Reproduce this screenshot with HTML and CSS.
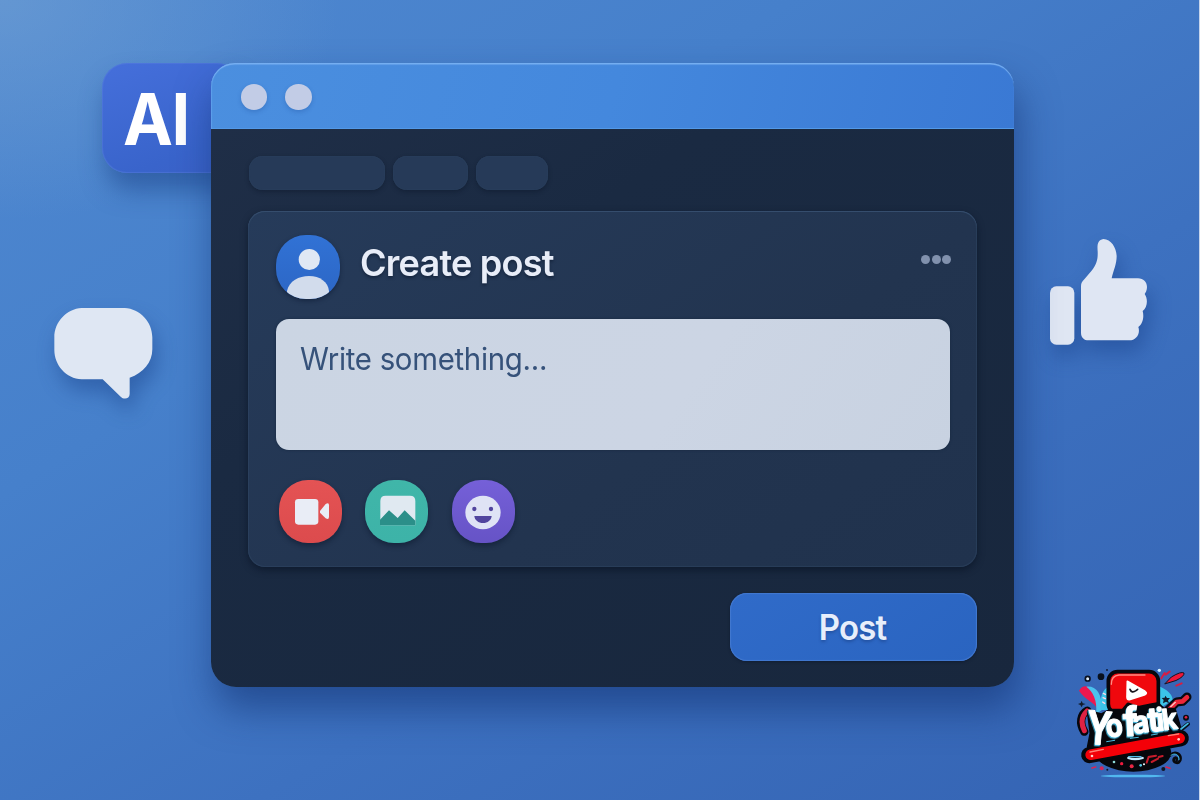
FILE: index.html
```
<!DOCTYPE html>
<html lang="en">
<head>
<meta charset="utf-8">
<title>Create post</title>
<link rel="stylesheet" href="styles.css">
</head>
<body>
<main class="stage">
  <div class="ai-badge"><span class="ai-text">AI</span></div>

  <svg class="bubble" viewBox="0 0 450 390" aria-hidden="true">
    <path fill="#dfe7f3" d="M155 54H284C330 56 367 96 367 142V178C367 216 340 250 299 263V312C299 327 281 330 272 320L218 268H155C108 266 73 225 73 180V142C73 96 110 56 155 54Z"/>
  </svg>

  <svg class="thumb" viewBox="0 0 420 450" aria-hidden="true">
    <rect x="60" y="199" width="73" height="175" rx="19" fill="#dfe6f3"/>
    <path fill="#dfe6f3" d="M153 199C153 189 157 184 163 178L186 151C200 133 204 117 203 94C201 72 204 60 220 57C243 58 259 82 260 108C260 134 250 151 245 175H324C340 175 351 187 351 201C351 211 347 218 344 222C355 238 352 263 338 273C343 291 338 312 325 321C332 342 318 361 298 361H176C162 361 153 352 153 338Z"/>
  </svg>

  <section class="window">
    <header class="titlebar"><i class="dot"></i><i class="dot"></i></header>
    <div class="content">
      <nav class="tabs"><i class="tab tab-wide"></i><i class="tab"></i><i class="tab tab-last"></i></nav>
      <article class="card">
        <div class="card-head">
          <svg class="avatar" viewBox="0 0 64 64" aria-hidden="true">
            <circle cx="33.300" cy="24.500" r="10.600" fill="#e0e8f4"/>
            <path fill="#d2dcec" d="M11 64V56C13 46 23 41 33 41C44 41 52 47 53 56V64Z"/>
          </svg>
          <h1 class="title">Create post</h1>
          <div class="more"><i></i><i></i><i></i></div>
        </div>
        <div class="field"><span class="placeholder">Write something...</span></div>
        <div class="actions">
          <svg class="action video" viewBox="0 0 189 189" aria-hidden="true">
            <rect x="48" y="57" width="70" height="77" rx="10" fill="#e9edf6"/>
            <path fill="#e9edf6" d="M123 93L140 72Q150 66 150 76V110Q150 121 140 115L123 98Z"/>
          </svg>
          <svg class="action image" viewBox="0 0 189 189" aria-hidden="true">
            <path fill="#e0e9f1" d="M46 136V63Q46 47 62 47H135Q151 47 151 63V136Z"/>
            <path fill="#2b8f89" d="M45 136V119L72 91L98 114L119 91L151 122V136Z"/>
          </svg>
          <svg class="action emoji" viewBox="0 0 189 189" aria-hidden="true">
            <ellipse cx="93" cy="97.500" rx="53" ry="50" fill="#dfe3f5"/>
            <circle cx="67" cy="87" r="6.500" fill="#51459e"/>
            <circle cx="117" cy="87" r="6.500" fill="#51459e"/>
            <path fill="#51459e" d="M67 108H119C118 121 107 129 93 129S68 121 67 108Z"/>
          </svg>
        </div>
      </article>
      <footer class="footer"><button class="post"><span class="post-text">Post</span></button></footer>
    </div>
  </section>

  <svg class="logo" viewBox="0 0 390 420" aria-label="Yofatik">
    <ellipse cx="189" cy="348" rx="97" ry="4" fill="#51b8ef"/>
    <g stroke-linecap="round" stroke-linejoin="round">
      <path fill="#ed174f" d="M27 92C40 68 65 80 75 101C84 118 89 134 82 146C73 126 47 122 27 92Z"/>
      <path fill="#4bc1ed" d="M49 80C78 77 96 99 96 150L78 162C83 119 68 95 49 80Z"/>
      <path fill="#3bc4e8" d="M92 150C88 110 98 88 118 78V150ZM266 78C292 90 307 102 308 120L270 145Z"/>
      <circle cx="53" cy="56" r="7" fill="#dceaf8" stroke="#0a1020" stroke-width="5"/>
      <circle cx="93" cy="50" r="10" fill="#08101d"/>
      <circle cx="111" cy="30" r="3" fill="#101c38"/>
      <circle cx="268" cy="31" r="5" fill="#d5f2ff"/>
      <path fill="#ef1738" stroke="#111322" stroke-width="3" d="M285 71L304 51Q334 33 342 39Q344 49 319 61Z"/>
      <path d="M274 55L284 39M287 44L299 35M319 77L335 70" stroke="#d61d43" stroke-width="6"/>
      <path fill="#111b2a" d="M35 122L38 130L47 132L38 135L35 142L31 135L24 132L32 129ZM286 107L291 114L300 114L294 121L297 130L288 125L279 130L281 120L275 114L284 113Z"/>
      <path d="M100 100L106 103M99 113L106 116M98 126L104 130" stroke="#ffd9e7" stroke-width="4"/>
      <path d="M294 151L320 126L338 124L351 111" fill="none" stroke="#080b12" stroke-width="27"/>
      <path d="M295 151L320 126L338 124L351 112" fill="none" stroke="#ed2639" stroke-width="14"/>
      <path d="M302 140L316 127" stroke="#ffc8c6" stroke-width="4"/>
      <ellipse cx="190" cy="278" rx="114" ry="57" fill="#06070c"/>
      <path d="M52 152C32 163 27 190 43 215" fill="none" stroke="#06070c" stroke-width="25"/>
      <path d="M51 153C34 169 31 187 43 212" fill="none" stroke="#df2243" stroke-width="15"/>
      <rect x="115" y="35" width="150" height="125" rx="28" fill="#f0080d" stroke="#07080d" stroke-width="11"/>
      <path d="M124 73Q124 47 147 45H225" fill="none" stroke="#ff8c83" stroke-width="4"/>
      <path d="M172 64L225 94Q233 99 225 104L178 119Q171 120 171 111Z" fill="#fff" stroke="#fff" stroke-width="5"/>
      <path d="M180 88Q185 101 198 92L203 88" fill="none" stroke="#17131a" stroke-width="5"/>
      <path d="M58 285L332 235" stroke="#06070c" stroke-width="49"/>
      <path d="M58 157L94 168L120 154L160 153L175 135L205 145L245 137L262 134L280 150L311 151L327 205L58 260L66 220Z" fill="#06070c" stroke="#06070c" stroke-width="15"/>
      <path d="M62 284L329 235" stroke="#f40008" stroke-width="32"/>
      <path d="M60 276L100 268M295 227L326 222" stroke="#ff8175" stroke-width="4"/>
    </g>
    <g class="word">
      <text transform="translate(45 250) rotate(5)" font-size="138" textLength="76" lengthAdjust="spacingAndGlyphs">Y</text>
      <text transform="translate(111 233) rotate(-8)" font-size="96" textLength="52" lengthAdjust="spacingAndGlyphs">o</text>
      <text transform="translate(161 229) rotate(-3)" font-size="121" textLength="45" lengthAdjust="spacingAndGlyphs">f</text>
      <text transform="translate(192 221) rotate(-8)" font-size="92" textLength="50" lengthAdjust="spacingAndGlyphs">a</text>
      <text transform="translate(237 216) rotate(-6)" font-size="101" textLength="35" lengthAdjust="spacingAndGlyphs">t</text>
      <text transform="translate(263 213) rotate(-6)" font-size="94" textLength="22" lengthAdjust="spacingAndGlyphs">i</text>
      <text transform="translate(280 211) rotate(-7)" font-size="87" textLength="46" lengthAdjust="spacingAndGlyphs">k</text>
    </g>
    <g fill="none" stroke-linecap="round">
      <path d="M175 294Q194 301 218 294" stroke="#c8ebff" stroke-width="7"/>
      <path d="M176 290H213" stroke="#51bce9" stroke-width="4"/>
      <path d="M230 308L236 291L258 287M245 306L264 296M266 291L278 288" stroke="#c51c2b" stroke-width="6"/>
      <path d="M301 286C315 270 335 282 331 300C325 315 306 307 312 296C316 289 324 296 320 300" stroke="#07090e" stroke-width="8"/>
      <path d="M303 286C315 276 329 286 327 299" stroke="#40bbdd" stroke-width="3"/>
      <path d="M66 324L77 321M288 321L300 325" stroke="#d92354" stroke-width="5"/>
      <path d="M333 209L354 192" stroke="#07101c" stroke-width="12"/>
      <path d="M333 207L354 190" stroke="#43bbe2" stroke-width="5"/>
      <circle cx="348" cy="173" r="9" fill="#080b12"/>
      <circle cx="348" cy="172" r="4" fill="#e22443"/>
      <path d="M110 245L134 241M181 235L205 232M244 225L262 222" stroke="#48bfe5" stroke-width="3"/>
    </g>
    <g>
      <circle cx="155" cy="311" r="5" fill="#ef1b3e"/><circle cx="185" cy="319" r="6" fill="#e92845"/>
      <circle cx="212" cy="316" r="4" fill="#57c8e5"/><circle cx="132" cy="306" r="4" fill="#8ddad7"/>
      <circle cx="222" cy="313" r="3" fill="#fff"/><circle cx="95" cy="325" r="6" fill="#d32457"/>
      <circle cx="112" cy="329" r="3" fill="#101525"/><circle cx="280" cy="327" r="6" fill="#101525"/>
      <circle cx="66" cy="288" r="4" fill="#ffd3cd"/><circle cx="326" cy="238" r="4" fill="#ffd3cd"/>
    </g>
  </svg>
</main>
</body>
</html>
```
FILE: styles.css
```
* { box-sizing: border-box; }
body { margin: 0; font-family: Inter, "Liberation Sans", sans-serif; }
.stage {
  position: relative;
  width: 1200px;
  height: 800px;
  padding: 63px 186px 0 210.5px;
  overflow: hidden;
  border-right: 1px solid #c7d5ec;
  background:
    radial-gradient(ellipse 340px 220px at 0 0, rgba(120, 165, 212, .5), transparent),
    linear-gradient(148deg, #4f88d0 0%, #4680cb 32%, #3d71c0 62%, #3463b3 100%);
}
.ai-badge {
  position: absolute;
  left: 102px;
  top: 63px;
  width: 140px;
  height: 110px;
  padding: 15px 0 0 21px;
  border-radius: 25px;
  background: linear-gradient(160deg, #456fdb, #3964cb 75%, #3b61c7);
  box-shadow: 4px 17px 25px rgba(24, 61, 132, .5), inset 0 0 1px 1px rgba(94, 132, 225, .4);
}
.ai-text {
  display: inline-block;
  font-size: 72px;
  line-height: 82px;
  font-weight: 700;
  letter-spacing: -1.5px;
  color: #fff;
  transform: scaleX(.93);
  transform-origin: 0 50%;
}
.bubble, .thumb { position: absolute; filter: drop-shadow(4px 12px 10px rgba(23, 61, 135, .45)); overflow: visible; }
.bubble { left: 30px; top: 290px; width: 150px; height: 130px; }
.thumb { left: 1030px; top: 220px; width: 140px; height: 150px; }
.window {
  position: relative;
  width: 803.5px;
  height: 624px;
  border-radius: 25px;
  background: linear-gradient(145deg, #202f48, #1a2a42 35%, #18273d);
  box-shadow: 4px 22px 38px rgba(22, 55, 121, .65);
}
.titlebar {
  display: flex;
  gap: 18px;
  height: 66px;
  padding: 20.5px 30px;
  border-radius: 24px 24px 0 0;
  background: linear-gradient(105deg, #4b8fdf, #4488dd 50%, #3a79d4);
  box-shadow: inset 0 2px 1px -0.5px #78b0f2, inset 1px 0 1px #5e9eea, inset 0 -1px #5298e8;
}
.dot { width: 26.5px; height: 26px; border-radius: 50%; background: #c2cce6; box-shadow: 0 2px 4px rgba(31, 75, 151, .3); }
.content { padding: 27px 37px 0 37.5px; }
.tabs { display: flex; gap: 8px; height: 34px; padding-left: .5px; }
.tab { width: 75px; border-radius: 14px; background: #263a58; box-shadow: 0 2px 4px rgba(9, 20, 38, .4), inset 0 0 1px #38516f; }
.tab-wide { width: 136px; }
.tab-last { width: 72px; }
.card {
  height: 356px;
  margin-top: 21px;
  padding: 24px 27px 0 28px;
  border-radius: 17px;
  background: linear-gradient(145deg, #263b5a, #22344f 60%, #20324d);
  box-shadow: 0 3px 7px rgba(6, 17, 33, .6), inset 0 1px #354d6d, inset 0 0 1px 1px rgba(55, 79, 111, .4);
}
.card-head { display: flex; height: 64px; }
.avatar { width: 64px; height: 64px; border-radius: 30px; background: linear-gradient(#3172d5, #2c66c5); box-shadow: 0 2px 4px rgba(9, 21, 46, .5); }
.title {
  margin: 4px 0 0 20px;
  width: 260px;
  font-size: 37px;
  line-height: 48px;
  font-weight: 600;
  letter-spacing: -.8px;
  color: #e8edf8;
  white-space: nowrap;
  transform: scaleX(.975);
  transform-origin: 0 50%;
  text-shadow: 0 2px 3px rgba(8, 20, 40, .5);
}
.more { display: flex; gap: 1.500px; margin: 20px -1px 0 auto; }
.more i { width: 9px; height: 9px; border-radius: 50%; background: #8191ad; }
.field {
  height: 131px;
  margin-top: 20px;
  padding: 20px 24px;
  border-radius: 13px;
  background: linear-gradient(125deg, #cbd5e3, #ccd5e4 60%, #c8d2e1);
  box-shadow: 0 0 3px #172940;
}
.placeholder { display: inline-block; font-size: 31px; line-height: 40px; letter-spacing: -.3px; color: #36527a; white-space: nowrap; transform-origin: 0 50%; transform: scaleX(.948); }
.actions { display: flex; gap: 23.5px; margin: 29.5px 0 0 2.5px; }
.action { width: 63px; height: 63px; border-radius: 29px; box-shadow: 0 3px 5px rgba(8, 19, 39, .45); }
.video { background: linear-gradient(#e45354, #dc4b4d); }
.image { background: linear-gradient(#40b6a9, #3db3a8); }
.emoji { background: linear-gradient(#7560d8, #6653c6); }
.footer { display: flex; justify-content: flex-end; margin-top: 26px; }
.post {
  width: 247px;
  height: 68px;
  padding: 0;
  border: 0;
  border-radius: 17px;
  background: linear-gradient(145deg, #306bc9, #2a64c0);
  box-shadow: inset 0 0 1px 1px #4379d0, 0 1px 3px rgba(7, 18, 37, .5);
  font-family: Inter, "Liberation Sans", sans-serif;
  font-size: 35px;
  font-weight: 600;
  letter-spacing: -.8px;
  color: #e7eefb;
}
.post-text { display: inline-block; transform: translateX(-.5px) scaleX(.94); text-shadow: 0 2px 3px rgba(21, 53, 115, .4); }
.logo { position: absolute; left: 1070px; top: 660px; width: 130px; height: 140px; filter: blur(.25px); }
.word { font-family: Inter, "Liberation Sans", sans-serif; font-weight: 700; fill: #fff; stroke: #fff; stroke-width: 3px; stroke-linejoin: round; filter: drop-shadow(-2px 4px 0 #4abfe4); }
```
